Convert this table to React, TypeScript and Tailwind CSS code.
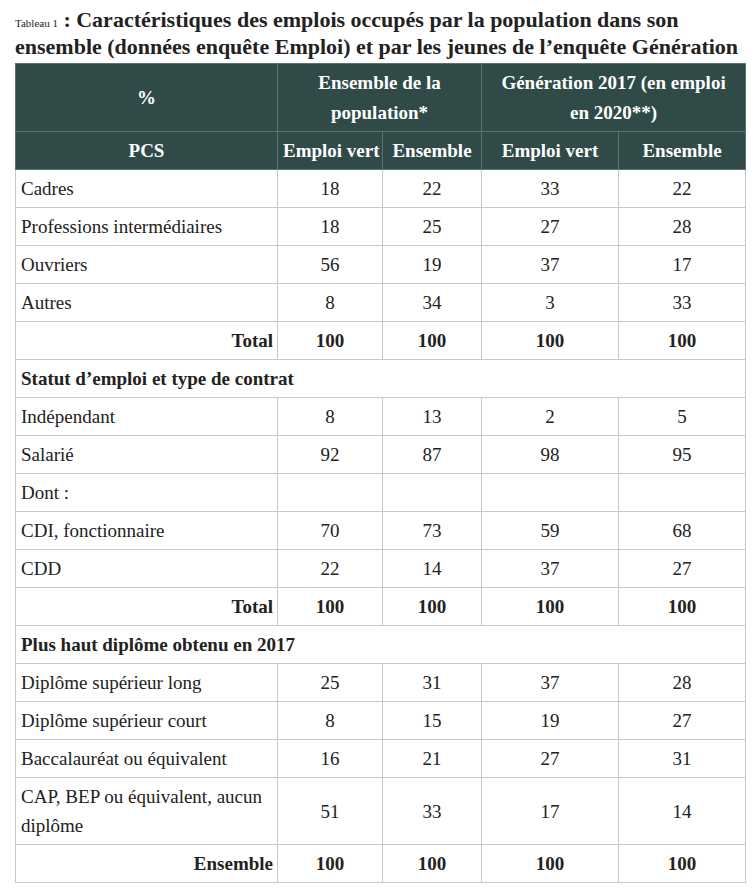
type Row =
  | { kind: "data"; label: string; values: string[]; tall?: boolean }
  | { kind: "total"; label: string; values: string[] }
  | { kind: "section"; label: string }
  | { kind: "empty"; label: string };

const rows: Row[] = [
  { kind: "data", label: "Cadres", values: ["18", "22", "33", "22"] },
  { kind: "data", label: "Professions intermédiaires", values: ["18", "25", "27", "28"] },
  { kind: "data", label: "Ouvriers", values: ["56", "19", "37", "17"] },
  { kind: "data", label: "Autres", values: ["8", "34", "3", "33"] },
  { kind: "total", label: "Total", values: ["100", "100", "100", "100"] },
  { kind: "section", label: "Statut d’emploi et type de contrat" },
  { kind: "data", label: "Indépendant", values: ["8", "13", "2", "5"] },
  { kind: "data", label: "Salarié", values: ["92", "87", "98", "95"] },
  { kind: "empty", label: "Dont :" },
  { kind: "data", label: "CDI, fonctionnaire", values: ["70", "73", "59", "68"] },
  { kind: "data", label: "CDD", values: ["22", "14", "37", "27"] },
  { kind: "total", label: "Total", values: ["100", "100", "100", "100"] },
  { kind: "section", label: "Plus haut diplôme obtenu en 2017" },
  { kind: "data", label: "Diplôme supérieur long", values: ["25", "31", "37", "28"] },
  { kind: "data", label: "Diplôme supérieur court", values: ["8", "15", "19", "27"] },
  { kind: "data", label: "Baccalauréat ou équivalent", values: ["16", "21", "27", "31"] },
  { kind: "data", label: "CAP, BEP ou équivalent, aucun diplôme", values: ["51", "33", "17", "14"], tall: true },
  { kind: "total", label: "Ensemble", values: ["100", "100", "100", "100"] },
];

const cell = "border border-[#c9c9c9] px-[5px] py-0 leading-[29px]";
const head = "border border-[#5e716e] px-[5px] py-0 text-center font-bold text-white";

function BodyRow({ row }: { row: Row }) {
  if (row.kind === "section") {
    return (
      <tr className="h-[38px]">
        <td colSpan={5} className={`${cell} font-bold`}>
          {row.label}
        </td>
      </tr>
    );
  }
  if (row.kind === "empty") {
    return (
      <tr className="h-[38px]">
        <td className={cell}>{row.label}</td>
        <td className={cell} />
        <td className={cell} />
        <td className={cell} />
        <td className={cell} />
      </tr>
    );
  }
  const isTotal = row.kind === "total";
  const tall = row.kind === "data" && row.tall;
  return (
    <tr className={tall ? "h-[67px]" : "h-[38px]"}>
      <td className={`${cell} ${isTotal ? "pr-[4px] text-right font-bold" : ""}`}>
        {tall ? (
          <>
            CAP, BEP ou équivalent, aucun
            <br />
            diplôme
          </>
        ) : (
          row.label
        )}
      </td>
      {row.values.map((v, i) => (
        <td key={i} className={`${cell} text-center ${isTotal ? "font-bold" : ""}`}>
          {v}
        </td>
      ))}
    </tr>
  );
}

export default function App() {
  return (
    <div
      className="min-h-[889px] w-[754px] bg-white text-[#222]"
      style={{ fontFamily: '"Liberation Serif", "DejaVu Serif", serif' }}
    >
      {/* Title */}
      <div className="h-[63px] overflow-hidden px-[15px] pt-[6px] text-[22px] leading-[27px] whitespace-nowrap">
        <span className="align-baseline text-[11px] font-normal leading-none">Tableau 1</span>
        <span className="font-bold"> : Caractéristiques des emplois occupés par la population dans son</span>
        <br />
        <span className="font-bold">
          ensemble (données enquête Emploi) et par les jeunes de l’enquête Génération
        </span>
      </div>

      {/* Table */}
      <div className="px-[15px]">
        <table className="w-[730px] table-fixed border-collapse text-[19px]">
          <colgroup>
            <col className="w-[262px]" />
            <col className="w-[105px]" />
            <col className="w-[99px]" />
            <col className="w-[137px]" />
            <col className="w-[127px]" />
          </colgroup>
          <thead className="bg-[#2f4a47]">
            <tr className="h-[68px]">
              <th className={`${head} leading-[30px]`}>%</th>
              <th colSpan={2} className={`${head} leading-[30px]`}>
                Ensemble de la
                <br />
                population*
              </th>
              <th colSpan={2} className={`${head} leading-[30px]`}>
                Génération 2017 (en emploi
                <br />
                en 2020**)
              </th>
            </tr>
            <tr className="h-[38px]">
              <th className={`${head} leading-[29px]`}>PCS</th>
              <th className={`${head} whitespace-nowrap px-[2px] leading-[29px]`}>Emploi vert</th>
              <th className={`${head} leading-[29px]`}>Ensemble</th>
              <th className={`${head} leading-[29px]`}>Emploi vert</th>
              <th className={`${head} leading-[29px]`}>Ensemble</th>
            </tr>
          </thead>
          <tbody>
            {rows.map((row, i) => (
              <BodyRow key={i} row={row} />
            ))}
          </tbody>
        </table>
      </div>

      {/* page edge */}
      <div className="mt-[7px] h-[2px] w-full bg-[#8c8c8c]" />
    </div>
  );
}
